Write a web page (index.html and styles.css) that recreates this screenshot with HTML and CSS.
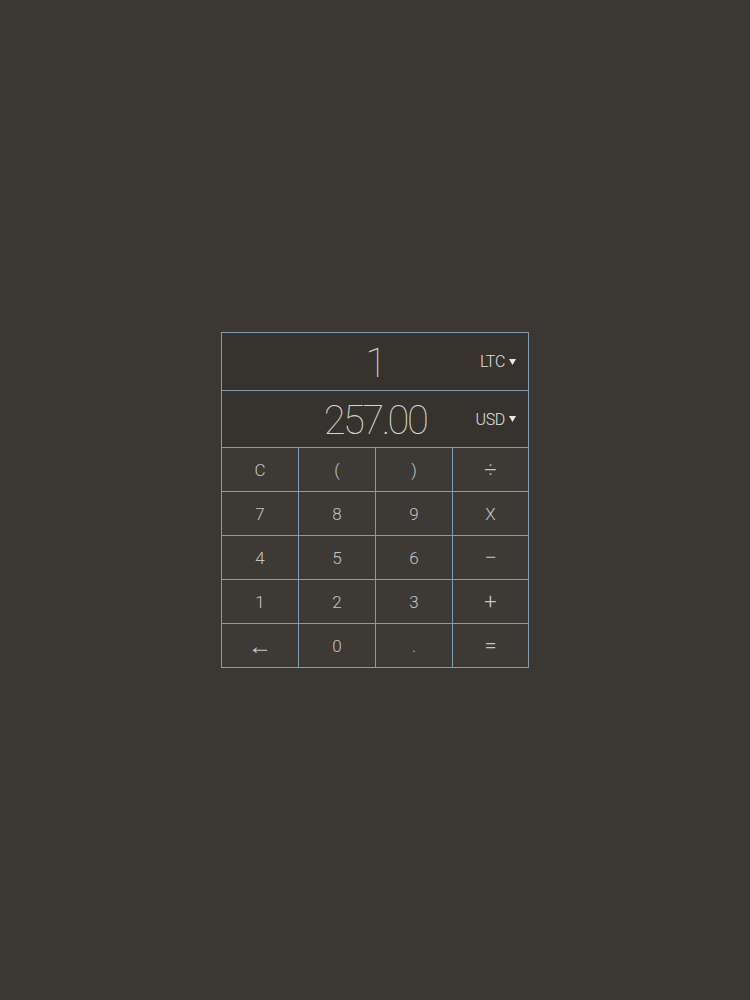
FILE: index.html
```html
<!DOCTYPE html>
<html>
<head>
<meta charset="utf-8">
<link rel="stylesheet" href="styles.css">
</head>
<body>
<div class="calc">
  <div class="display">
    <span class="spacer"></span>
    <span class="value">1</span>
    <span class="cur">LTC<svg class="caret" width="7" height="6" viewBox="0 0 7 6"><path d="M0 0H7L3.5 6Z" fill="#e8e8e8"/></svg></span>
  </div>
  <div class="display">
    <span class="spacer"></span>
    <span class="value">257.00</span>
    <span class="cur">USD<svg class="caret" width="7" height="6" viewBox="0 0 7 6"><path d="M0 0H7L3.5 6Z" fill="#e8e8e8"/></svg></span>
  </div>
  <div class="key">C</div>
  <div class="key">(</div>
  <div class="key">)</div>
  <div class="key op">÷</div>
  <div class="key">7</div>
  <div class="key">8</div>
  <div class="key">9</div>
  <div class="key">X</div>
  <div class="key">4</div>
  <div class="key">5</div>
  <div class="key">6</div>
  <div class="key op">−</div>
  <div class="key">1</div>
  <div class="key">2</div>
  <div class="key">3</div>
  <div class="key op">+</div>
  <div class="key arrow">←</div>
  <div class="key">0</div>
  <div class="key">.</div>
  <div class="key op">=</div>
</div>
</body>
</html>
```
FILE: styles.css
```css
html, body {
  margin: 0;
  padding: 0;
  background: #3b3834;
}
body {
  min-height: 100vh;
  display: flex;
  align-items: center;
  justify-content: center;
  font-family: Roboto, "Liberation Sans", sans-serif;
}
.calc {
  display: grid;
  grid-template-columns: 76px 76px 76px 75px;
  grid-template-rows: 57px 56px repeat(5, 43px);
  gap: 1px;
  padding: 1px;
  background: #7e9db0;
}
.display {
  grid-column: 1 / -1;
  background: #36322e;
  display: grid;
  grid-template-columns: 1fr auto 1fr;
  align-items: center;
}
.value {
  color: #d4d4d4;
  font-size: 40px;
  font-weight: 100;
  letter-spacing: -2.6px;
  line-height: 1;
  padding-top: 4px;
}
.cur {
  justify-self: end;
  padding-right: 12px;
  color: #e0e0e0;
  font-size: 16px;
  font-weight: 300;
  letter-spacing: -0.3px;
  display: flex;
  align-items: center;
  gap: 4px;
}
.key {
  background: #3d3a36;
  color: #c4c4c4;
  font-size: 17px;
  font-weight: 300;
  display: flex;
  align-items: center;
  justify-content: center;
}
.key.op {
  font-size: 22px;
}
.key.arrow {
  font-size: 24px;
  font-weight: 100;
}
```
